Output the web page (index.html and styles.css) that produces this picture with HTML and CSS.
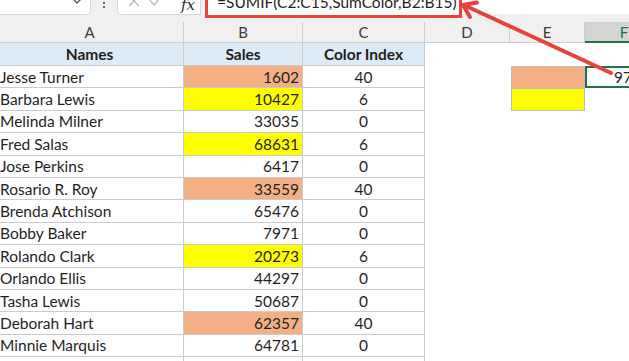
FILE: index.html
```html
<!DOCTYPE html>
<html lang="en">

<head>
  <meta charset="UTF-8">
  <meta name="viewport" content="width=device-width, initial-scale=1.0">
  <title>SumColor</title>
  <link rel="stylesheet" href="styles.css">
</head>

<body>
  <div class="app">
    <!-- formula bar -->
    <div class="topbar">
      <div class="namebox">
        <svg class="chev" width="12" height="6" viewBox="0 0 12 6">
          <polyline points="1,-2 6,3 11,-2" fill="none" stroke="#555" stroke-width="1.3" />
        </svg>
      </div>
      <div class="dots"><span></span><span></span></div>
      <div class="fxbox">
        <svg width="12" height="8" viewBox="0 0 12 8">
          <path d="M1,-4 L11,6 M11,-4 L1,6" stroke="#b5b5b5" stroke-width="1.2" fill="none" />
        </svg>
        <svg width="14" height="8" viewBox="0 0 14 8">
          <polyline points="1,-1 6,5 13,-3" stroke="#b5b5b5" stroke-width="1.2" fill="none" />
        </svg>
        <span class="fx">fx</span>
      </div>
      <div class="formula"></div>
    </div>

    <div class="sheet">
      <div class="colhead">A</div>
      <div class="colhead">B</div>
      <div class="colhead">C</div>
      <div class="colhead">D</div>
      <div class="colhead">E</div>
      <div class="colhead active">F</div>

      <div class="cell th">Names</div>
      <div class="cell th">Sales</div>
      <div class="cell th">Color Index</div>
      <div class="blank"></div>
      <div class="blank"></div>
      <div class="blank"></div>

      <div class="cell name">Jesse Turner</div>
      <div class="cell num orange">1602</div>
      <div class="cell idx">40</div>
      <div class="blank"></div>
      <div class="blank swatch orange"></div>
      <div class="blank selected">97518</div>

      <div class="cell name">Barbara Lewis</div>
      <div class="cell num yellow">10427</div>
      <div class="cell idx">6</div>
      <div class="blank"></div>
      <div class="blank swatch yellow"></div>
      <div class="blank"></div>

      <div class="cell name">Melinda Milner</div>
      <div class="cell num">33035</div>
      <div class="cell idx">0</div>
      <div class="blank"></div>
      <div class="blank"></div>
      <div class="blank"></div>

      <div class="cell name">Fred Salas</div>
      <div class="cell num yellow">68631</div>
      <div class="cell idx">6</div>
      <div class="blank"></div>
      <div class="blank"></div>
      <div class="blank"></div>

      <div class="cell name">Jose Perkins</div>
      <div class="cell num">6417</div>
      <div class="cell idx">0</div>
      <div class="blank"></div>
      <div class="blank"></div>
      <div class="blank"></div>

      <div class="cell name">Rosario R. Roy</div>
      <div class="cell num orange">33559</div>
      <div class="cell idx">40</div>
      <div class="blank"></div>
      <div class="blank"></div>
      <div class="blank"></div>

      <div class="cell name">Brenda Atchison</div>
      <div class="cell num">65476</div>
      <div class="cell idx">0</div>
      <div class="blank"></div>
      <div class="blank"></div>
      <div class="blank"></div>

      <div class="cell name">Bobby Baker</div>
      <div class="cell num">7971</div>
      <div class="cell idx">0</div>
      <div class="blank"></div>
      <div class="blank"></div>
      <div class="blank"></div>

      <div class="cell name">Rolando Clark</div>
      <div class="cell num yellow">20273</div>
      <div class="cell idx">6</div>
      <div class="blank"></div>
      <div class="blank"></div>
      <div class="blank"></div>

      <div class="cell name">Orlando Ellis</div>
      <div class="cell num">44297</div>
      <div class="cell idx">0</div>
      <div class="blank"></div>
      <div class="blank"></div>
      <div class="blank"></div>

      <div class="cell name">Tasha Lewis</div>
      <div class="cell num">50687</div>
      <div class="cell idx">0</div>
      <div class="blank"></div>
      <div class="blank"></div>
      <div class="blank"></div>

      <div class="cell name">Deborah Hart</div>
      <div class="cell num orange">62357</div>
      <div class="cell idx">40</div>
      <div class="blank"></div>
      <div class="blank"></div>
      <div class="blank"></div>

      <div class="cell name">Minnie Marquis</div>
      <div class="cell num">64781</div>
      <div class="cell idx">0</div>
      <div class="blank"></div>
      <div class="blank"></div>
      <div class="blank"></div>

      <div class="cell name"></div>
      <div class="cell num"></div>
      <div class="cell idx"></div>
      <div class="blank"></div>
      <div class="blank"></div>
      <div class="blank"></div>
    </div>

    <!-- annotation -->
    <div class="callout">=SUMIF(C2:C15,SumColor,B2:B15)</div>
    <svg class="arrow" width="629" height="361" viewBox="0 0 629 361">
      <line x1="611" y1="73" x2="466" y2="6" stroke="#e8423d" stroke-width="4" stroke-linecap="round" />
      <polyline points="477,2.5 463,5 470,17" fill="none" stroke="#e8423d" stroke-width="4" stroke-linecap="round" stroke-linejoin="round" />
    </svg>
  </div>
</body>

</html>
```

FILE: styles.css
```css
* {
  padding: 0;
  margin: 0;
  box-sizing: border-box;
}

body {
  width: 629px;
  height: 361px;
  overflow: hidden;
  background: #fff;
  font-family: Lato, "Liberation Sans", sans-serif;
  color: #1f1f1f;
}

.app {
  position: relative;
  width: 629px;
  height: 361px;
  overflow: hidden;
}

/* top formula bar */
.topbar {
  height: 22px;
  background: #f0f0f0;
  display: flex;
  align-items: flex-start;
}

.namebox {
  width: 91px;
  height: 15px;
  background: #fff;
  border: 1px solid #d6d6d6;
  border-top: none;
  border-left: none;
  border-bottom-right-radius: 5px;
  display: flex;
  justify-content: flex-end;
  padding-right: 7px;
}

.dots {
  width: 26px;
  display: flex;
  flex-direction: column;
  align-items: center;
  gap: 2px;
  padding-top: 2px;
}

.dots span {
  width: 2px;
  height: 2px;
  background: #666;
}

.fxbox {
  width: 84px;
  height: 15px;
  background: #fff;
  border: 1px solid #d6d6d6;
  border-top: none;
  border-bottom-left-radius: 5px;
  display: flex;
  align-items: flex-start;
  padding-left: 10px;
  gap: 8px;
}

.fx {
  font-family: "DejaVu Serif", serif;
  font-style: italic;
  font-size: 15px;
  line-height: 11px;
  margin-left: 11px;
  color: #2b2b2b;
}

.formula {
  flex: 1;
  height: 14px;
  margin-left: 2px;
  background: #fff;
}

/* sheet grid */
.sheet {
  margin-left: -4px;
  display: grid;
  grid-template-columns: 188px 119px 122px 85px 75px 78px;
  grid-template-rows: 21px 23px;
  grid-auto-rows: 22.4px;
  font-size: 15.5px;
}

.colhead {
  background: #f0f0f0;
  border-right: 1px solid #cfcfcf;
  border-bottom: 1px solid #cfcfcf;
  display: flex;
  align-items: center;
  justify-content: center;
  color: #3a3a3a;
  font-size: 15px;
}

.colhead.active {
  background: #d4d4d4;
  color: #217346;
  border-bottom: 2px solid #217346;
  padding-left: 1px;
}

.cell {
  border-right: 1px solid #cbcbcb;
  border-bottom: 1px solid #cbcbcb;
  display: flex;
  align-items: center;
  white-space: nowrap;
}

.th {
  background: #ddebf7;
  font-weight: bold;
  justify-content: center;
}

.name {
  padding-left: 4px;
}

.num {
  justify-content: flex-end;
  padding-right: 3px;
}

.idx {
  justify-content: center;
}

.blank {
  display: flex;
  align-items: center;
}

.orange {
  background: #f4b084;
}

.yellow {
  background: #ffff00;
}

.swatch {
  border: 1px solid #bdbdbd;
  margin-left: 1px;
}

.swatch.orange {
  border-bottom: none;
}

.selected {
  border: 2px solid #217346;
  justify-content: flex-end;
  padding-right: 2px;
}

/* annotation */
.callout {
  position: absolute;
  left: 205px;
  top: -4px;
  width: 257px;
  height: 22px;
  background: #fff;
  border: 3px solid #e8423d;
  font-size: 15.5px;
  line-height: 6px;
  padding-left: 9px;
  color: #1f1f1f;
  white-space: nowrap;
}

.arrow {
  position: absolute;
  left: 0;
  top: 0;
  pointer-events: none;
}
```
